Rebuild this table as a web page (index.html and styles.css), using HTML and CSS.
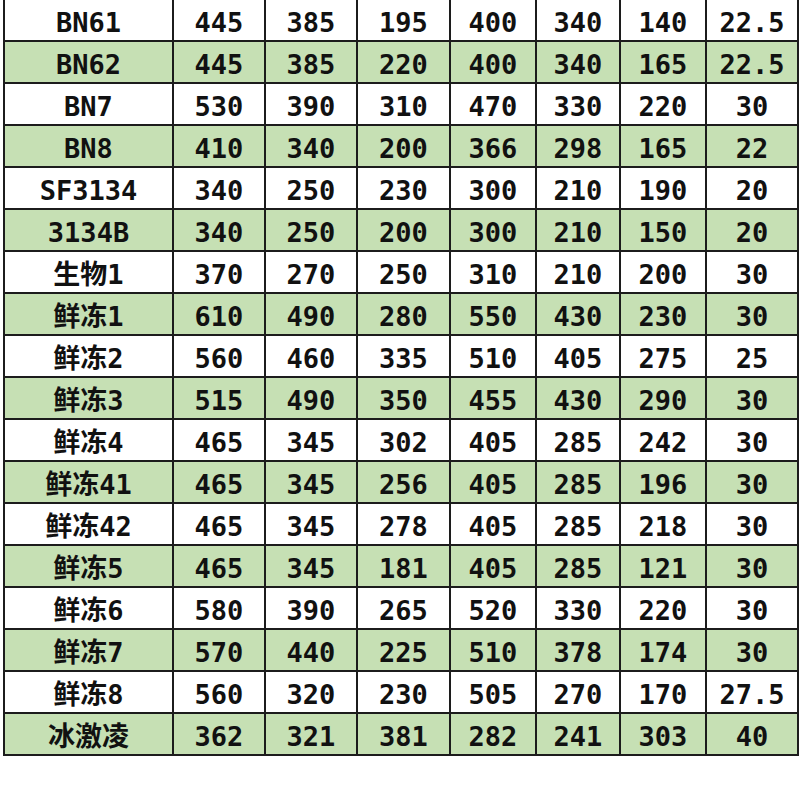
FILE: index.html
```html
<!DOCTYPE html>
<html lang="zh">
<head>
<meta charset="utf-8">
<title>Table</title>
<link rel="stylesheet" href="styles.css">
</head>
<body>
<table class="grid">
<colgroup>
<col class="c-name"><col class="c-a"><col class="c-b"><col class="c-c"><col class="c-d"><col class="c-e"><col class="c-f"><col class="c-g">
</colgroup>
<tbody>
<tr><td>BN61</td><td>445</td><td>385</td><td>195</td><td>400</td><td>340</td><td>140</td><td>22.5</td></tr>
<tr><td>BN62</td><td>445</td><td>385</td><td>220</td><td>400</td><td>340</td><td>165</td><td>22.5</td></tr>
<tr><td>BN7</td><td>530</td><td>390</td><td>310</td><td>470</td><td>330</td><td>220</td><td>30</td></tr>
<tr><td>BN8</td><td>410</td><td>340</td><td>200</td><td>366</td><td>298</td><td>165</td><td>22</td></tr>
<tr><td>SF3134</td><td>340</td><td>250</td><td>230</td><td>300</td><td>210</td><td>190</td><td>20</td></tr>
<tr><td>3134B</td><td>340</td><td>250</td><td>200</td><td>300</td><td>210</td><td>150</td><td>20</td></tr>
<tr><td>生物1</td><td>370</td><td>270</td><td>250</td><td>310</td><td>210</td><td>200</td><td>30</td></tr>
<tr><td>鲜冻1</td><td>610</td><td>490</td><td>280</td><td>550</td><td>430</td><td>230</td><td>30</td></tr>
<tr><td>鲜冻2</td><td>560</td><td>460</td><td>335</td><td>510</td><td>405</td><td>275</td><td>25</td></tr>
<tr><td>鲜冻3</td><td>515</td><td>490</td><td>350</td><td>455</td><td>430</td><td>290</td><td>30</td></tr>
<tr><td>鲜冻4</td><td>465</td><td>345</td><td>302</td><td>405</td><td>285</td><td>242</td><td>30</td></tr>
<tr><td>鲜冻41</td><td>465</td><td>345</td><td>256</td><td>405</td><td>285</td><td>196</td><td>30</td></tr>
<tr><td>鲜冻42</td><td>465</td><td>345</td><td>278</td><td>405</td><td>285</td><td>218</td><td>30</td></tr>
<tr><td>鲜冻5</td><td>465</td><td>345</td><td>181</td><td>405</td><td>285</td><td>121</td><td>30</td></tr>
<tr><td>鲜冻6</td><td>580</td><td>390</td><td>265</td><td>520</td><td>330</td><td>220</td><td>30</td></tr>
<tr><td>鲜冻7</td><td>570</td><td>440</td><td>225</td><td>510</td><td>378</td><td>174</td><td>30</td></tr>
<tr><td>鲜冻8</td><td>560</td><td>320</td><td>230</td><td>505</td><td>270</td><td>170</td><td>27.5</td></tr>
<tr><td>冰激凌</td><td>362</td><td>321</td><td>381</td><td>282</td><td>241</td><td>303</td><td>40</td></tr>
</tbody>
</table>
</body>
</html>
```
FILE: styles.css
```css
html, body {
  margin: 0;
  padding: 0;
  background: #ffffff;
}

.grid {
  margin: -2px 0 0 3px;
  border-collapse: collapse;
  table-layout: fixed;
  width: 794px;
  font-family: "DejaVu Sans Mono", "Noto Sans CJK SC", monospace;
  font-weight: bold;
  font-size: 27px;
  color: #111111;
}

.c-name { width: 169px; }
.c-a { width: 92px; }
.c-b { width: 92px; }
.c-c { width: 93px; }
.c-d { width: 86px; }
.c-e { width: 84px; }
.c-f { width: 86px; }
.c-g { width: 92px; }

.grid td {
  border: 2px solid #1c1c1c;
  height: 42px;
  padding: 4px 0 0 0;
  box-sizing: border-box;
  text-align: center;
  vertical-align: middle;
  line-height: 1;
  white-space: nowrap;
}

.grid tr:nth-child(even) td {
  background: #c6e0b4;
}
```
